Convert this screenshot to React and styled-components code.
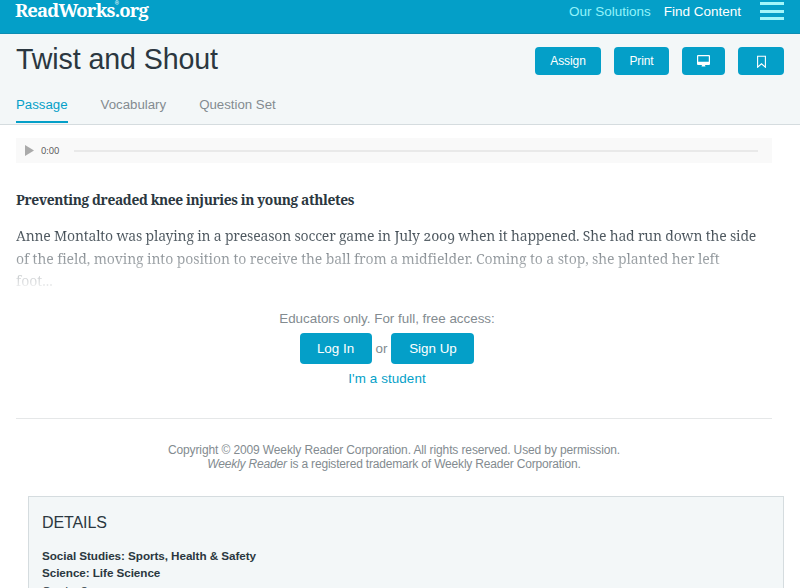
import React from 'react';
import styled, { createGlobalStyle } from 'styled-components';

const GlobalStyle = createGlobalStyle`
  * {
    box-sizing: border-box;
  }

  body {
    margin: 0;
    background: #fff;
    font-family: "Liberation Sans", Arial, sans-serif;
    color: #2b3740;
    overflow: hidden;
  }
`

const Page = styled.div`
  height: 588px;
  overflow: hidden;
`

const TopBar = styled.header`
  height: 34px;
  padding: 0 16px 0 15px;
  background: #049fc8;
  border-bottom: 1px solid #0c8db3;
  display: flex;
  align-items: flex-start;
`

const Logo = styled.div`
  display: flex;
  font-family: "Noto Serif", "DejaVu Serif", serif;
  font-stretch: condensed;
  font-weight: bold;
  font-size: 18.5px;
  line-height: 19px;
  letter-spacing: -0.84px;
  color: #fff;
`

const Registered = styled.span`
  width: 0;
  font-size: 5px;
  line-height: 6px;
  letter-spacing: 0;
`

const TopNav = styled.nav`
  margin-left: auto;
  display: flex;
  gap: 13px;
  line-height: 23px;
`

const TopLink = styled.a`
  font-size: 13.5px;
  color: ${props => props.$light ? '#93f3fa' : '#fff'};
`

const Burger = styled.div`
  width: 24px;
  margin: 2px 0 0 19px;
  display: flex;
  flex-direction: column;
  gap: 4.6px;
`

const BurgerLine = styled.span`
  height: 3px;
  background: #a2f6fa;
`

const TitleArea = styled.section`
  height: 91px;
  padding: 0 16px 1px;
  background: #f3f7f8;
  border-bottom: 1px solid #d5dcdf;
  display: flex;
  flex-direction: column;
  justify-content: space-between;
`

const TitleRow = styled.div`
  display: flex;
  justify-content: space-between;
  align-items: flex-start;
`

const Title = styled.h1`
  margin: 7px 0 0;
  font-size: 28.6px;
  font-weight: normal;
  line-height: 36px;
  letter-spacing: -0.1px;
`

const Actions = styled.div`
  display: flex;
  gap: 13px;
  margin-top: 13px;
`

const Button = styled.button`
  width: ${props => props.$width}px;
  height: ${props => props.$large ? 31 : 28}px;
  padding: 0;
  display: flex;
  align-items: center;
  justify-content: center;
  border: 0;
  border-radius: 4px;
  background: #049fc8;
  color: #fff;
  font-family: inherit;
  font-size: ${props => props.$large ? 13.4 : 12}px;
  letter-spacing: ${props => props.$large ? 0 : -0.1}px;
`

const Tabs = styled.div`
  display: flex;
  gap: 33px;
`

const Tab = styled.a`
  height: 27px;
  font-size: 13.25px;
  line-height: 18px;
  color: ${props => props.$active ? '#049fc8' : '#838b90'};
  border-bottom: 2px solid ${props => props.$active ? '#049fc8' : 'transparent'};
`

const Content = styled.main`
  padding: 13px 28px 0 16px;
`

const Player = styled.div`
  height: 25px;
  padding: 0 14px 0 9px;
  background: #f9f9f9;
  display: flex;
  align-items: center;
`

const Time = styled.span`
  width: 33px;
  margin-left: 7px;
  font-family: "Open Sans", sans-serif;
  font-size: 9.3px;
  color: #555;
`

const Track = styled.div`
  flex-grow: 1;
  height: 2px;
  background: #e9e9e9;
`

const Passage = styled.article`
  height: 132px;
  padding-top: 26px;
  font-family: "Noto Serif", "DejaVu Serif", serif;
  font-stretch: condensed;
  font-variant-numeric: oldstyle-nums;
`

const Heading = styled.h2`
  margin: 0 0 14px;
  font-size: 13.8px;
  line-height: 22px;
  letter-spacing: -0.39px;
`

const Story = styled.p`
  margin: 0;
  font-size: 14px;
  line-height: 22.6px;
  white-space: nowrap;
  background: linear-gradient(#2b3740, #fff);
  background-clip: text;
  color: transparent;
`

const Line = styled.span`
  display: block;
  letter-spacing: ${props => props.$spacing || 0}px;
`

const Access = styled.div`
  height: 123px;
  padding: 14px 14px 0 0;
  display: flex;
  flex-direction: column;
  align-items: center;
  font-size: 13.4px;
  line-height: 20px;
  color: #838b90;
`

const LoginRow = styled.div`
  display: flex;
  align-items: center;
  gap: 4px;
  margin: 4px 0 5px;
`

const StudentLink = styled.a`
  color: #049fc8;
  letter-spacing: 0.1px;
`

const Copyright = styled.div`
  height: 78px;
  padding-top: 24px;
  border-top: 1px solid #e5e7e8;
  text-align: center;
  font-size: 12px;
  line-height: 14px;
  color: #838b90;
`

const Details = styled.section`
  height: 120px;
  margin: 0 16px 0 28px;
  padding: 16px 13px;
  background: #f3f7f8;
  border: 1px solid #d5dcdf;
  font-size: 11.7px;
  line-height: 17.4px;
`

const DetailsTitle = styled.h3`
  margin: 0 0 14px;
  font-size: 16px;
  font-weight: normal;
  line-height: 20px;
  letter-spacing: -0.1px;
`

const Subject = styled.div`
  font-weight: bold;
  letter-spacing: -0.06px;
`

class App extends React.Component {
  state = {
    tab: 'Passage'
  }

  onClickTab = (tab) => {
    this.setState({tab: tab})
  }

  render() {
    return (
      <Page>
        <GlobalStyle />
        <TopBar>
          <Logo>ReadWorks<Registered>®</Registered>.org</Logo>
          <TopNav>
            <TopLink $light>Our Solutions</TopLink>
            <TopLink>Find Content</TopLink>
          </TopNav>
          <Burger>
            <BurgerLine />
            <BurgerLine />
            <BurgerLine />
          </Burger>
        </TopBar>
        <TitleArea>
          <TitleRow>
            <Title>Twist and Shout</Title>
            <Actions>
              <Button $width={66}>Assign</Button>
              <Button $width={55}>Print</Button>
              <Button $width={43} aria-label="Present">
                <svg width="13" height="13" viewBox="0 0 13 13">
                  <path d="M1 0h11a1 1 0 0 1 1 1v8a1 1 0 0 1-1 1H8l.5 1.5h-4L5 10H1a1 1 0 0 1-1-1V1a1 1 0 0 1 1-1zm.2 1.2v5.6h10.6V1.2z" fill="#fff" fillRule="evenodd" />
                </svg>
              </Button>
              <Button $width={46} aria-label="Bookmark">
                <svg width="9" height="13" viewBox="0 0 9 13">
                  <path d="M.6 1.2h7.8v11L4.5 8.8.6 12.2z" fill="none" stroke="#fff" strokeWidth="1.1" />
                </svg>
              </Button>
            </Actions>
          </TitleRow>
          <Tabs>
            {['Passage', 'Vocabulary', 'Question Set'].map((tab) => {
              return <Tab key={tab} $active={tab === this.state.tab} onClick={() => this.onClickTab(tab)}>{tab}</Tab>
            })}
          </Tabs>
        </TitleArea>
        <Content>
          <Player>
            <svg width="9" height="11" viewBox="0 0 9 11">
              <path d="M0 0l9 5.5L0 11z" fill="#aaa" />
            </svg>
            <Time>0:00</Time>
            <Track />
          </Player>
          <Passage>
            <Heading>Preventing dreaded knee injuries in young athletes</Heading>
            <Story>
              <Line $spacing={-0.19}>Anne Montalto was playing in a preseason soccer game in July 2009 when it happened. She had run down the side</Line>
              <Line $spacing={-0.1}>of the field, moving into position to receive the ball from a midfielder. Coming to a stop, she planted her left</Line>
              <Line>foot...</Line>
            </Story>
          </Passage>
          <Access>
            Educators only. For full, free access:
            <LoginRow>
              <Button $large $width={72}>Log In</Button>
              or
              <Button $large $width={83}>Sign Up</Button>
            </LoginRow>
            <StudentLink>I'm a student</StudentLink>
          </Access>
          <Copyright>
            <Line $spacing={-0.12}>Copyright © 2009 Weekly Reader Corporation. All rights reserved. Used by permission.</Line>
            <Line $spacing={-0.18}><em>Weekly Reader</em> is a registered trademark of Weekly Reader Corporation.</Line>
          </Copyright>
        </Content>
        <Details>
          <DetailsTitle>DETAILS</DetailsTitle>
          <Subject>Social Studies: Sports, Health &amp; Safety</Subject>
          <Subject>Science: Life Science</Subject>
          <div>Grade: 8</div>
        </Details>
      </Page>
    );
  }
}

export default App;
